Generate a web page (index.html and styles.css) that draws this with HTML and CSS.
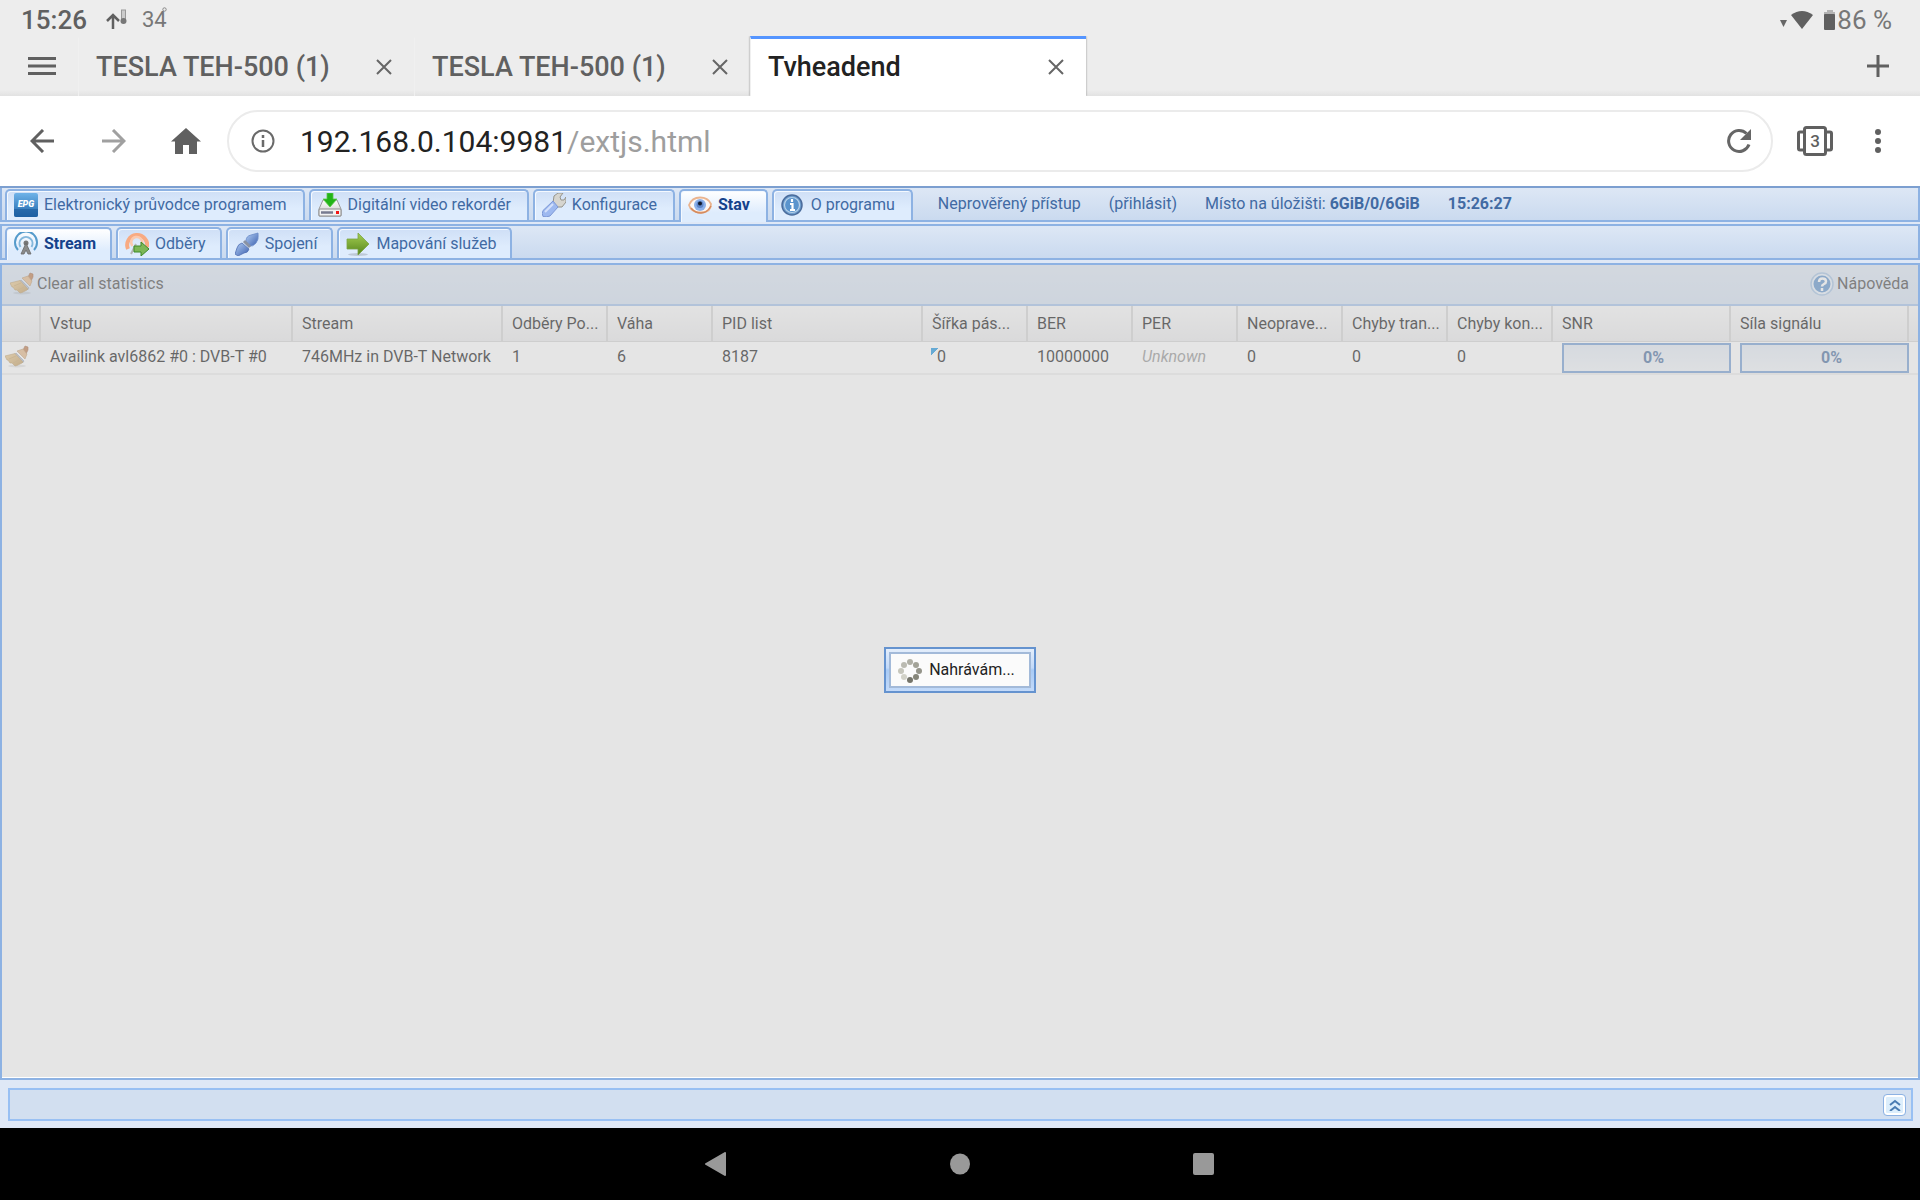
FILE: index.html
```html
<!DOCTYPE html>
<html lang="cs">
<head>
    <meta charset="UTF-8">
    <meta name="viewport" content="width=device-width, initial-scale=1.0">
    <title>Tvheadend</title>
    <link rel="stylesheet" href="styles.css">
</head>
<body>
    <svg class="defs" width="0" height="0" aria-hidden="true">
        <defs>
            <linearGradient id="gBlue" x1="0" y1="0" x2="0" y2="1">
                <stop offset="0" stop-color="#6fb3e8"/>
                <stop offset="1" stop-color="#1f66ab"/>
            </linearGradient>
            <linearGradient id="gSilver" x1="0" y1="0" x2="0" y2="1">
                <stop offset="0" stop-color="#ffffff"/>
                <stop offset="1" stop-color="#c4c4c4"/>
            </linearGradient>
            <linearGradient id="gGreen" x1="0" y1="0" x2="0" y2="1">
                <stop offset="0" stop-color="#a5cf52"/>
                <stop offset="1" stop-color="#55851c"/>
            </linearGradient>
            <linearGradient id="gPlug" x1="0" y1="0" x2="1" y2="1">
                <stop offset="0" stop-color="#b4d0f5"/>
                <stop offset="1" stop-color="#3b5fae"/>
            </linearGradient>
            <linearGradient id="gStraw" x1="0" y1="0" x2="1" y2="1">
                <stop offset="0" stop-color="#efcb8c"/>
                <stop offset="1" stop-color="#b98d48"/>
            </linearGradient>
            <symbol id="broom" viewBox="0 0 24 24">
                <ellipse cx="12" cy="21" rx="9" ry="1.500" fill="#000" opacity=".12"/>
                <path d="M18 5l2-4 3 1v3l-2 4z" fill="#b9703c" stroke="#94532a" stroke-width=".6"/>
                <path d="M12 6l6-2 4 5-2 5z" fill="#e3b17c" stroke="#b08450" stroke-width=".6"/>
                <path d="M11 8l8 8-1.500 2-7.500-9z" fill="#a9b8d0" stroke="#7f8a9c" stroke-width=".6"/>
                <path d="M10 8.500L0 11l2 4 1 0 2 3 2 0 3 3 2-.5 5-2.500 1-1z" fill="url(#gStraw)" stroke="#b08a4c" stroke-width=".6"/>
                <path d="M11 11l-7 3M14 15l-6 3" stroke="#c39c5c" stroke-width=".8" fill="none"/>
            </symbol>
            <symbol id="cross" viewBox="0 0 16 16">
                <path d="M1 1l14 14M15 1L1 15" stroke="#666" stroke-width="2" fill="none"/>
            </symbol>
        </defs>
    </svg>

    <div class="screen">
        <!-- system status bar -->
        <header class="statusbar">
            <span class="clock">15:26</span>
            <svg class="thermo" width="22" height="22" viewBox="0 0 22 22">
                <path d="M7 20V7M1 12l6-6 6 6" stroke="#606060" stroke-width="2.500" fill="none"/>
                <rect x="15.500" y="1" width="4" height="11" fill="#ccc" stroke="#999"/>
                <circle cx="17.500" cy="12" r="3" fill="#777"/>
            </svg>
            <span class="temp">34<svg width="5" height="5" viewBox="0 0 5 5"><circle cx="2.500" cy="2.500" r="1.700" fill="none" stroke="#888"/></svg></span>
            <span class="status-right">
                <svg width="34" height="20" viewBox="0 0 34 20">
                    <path d="M0 10h7l-3.500 7z" fill="#666"/>
                    <path d="M11 5Q22-3 33 5L22 19z" fill="#606060"/>
                </svg>
                <svg class="battery" width="12" height="20" viewBox="0 0 12 20">
                    <path d="M3 0h6v2h2v3H0V2h3z" fill="#b4b4b4"/>
                    <rect x="0" y="4" width="11" height="16" rx="1" fill="#606060"/>
                </svg>
                <span class="percent">86 %</span>
            </span>
        </header>

        <!-- browser tabs -->
        <div class="tabstrip">
            <button class="icon-btn menu-btn" aria-label="Menu">
                <svg width="28" height="20" viewBox="0 0 28 20"><path d="M0 2.500h28M0 10h28M0 17.500h28" stroke="#606060" stroke-width="3"/></svg>
            </button>
            <div class="browser-tab">
                <a href="#">TESLA TEH-500 (1)</a>
                <button class="icon-btn" aria-label="Zavřít"><svg width="16" height="16"><use href="#cross"/></svg></button>
            </div>
            <div class="browser-tab">
                <a href="#">TESLA TEH-500 (1)</a>
                <button class="icon-btn" aria-label="Zavřít"><svg width="16" height="16"><use href="#cross"/></svg></button>
            </div>
            <div class="browser-tab current">
                <a href="#">Tvheadend</a>
                <button class="icon-btn" aria-label="Zavřít"><svg width="16" height="16"><use href="#cross"/></svg></button>
            </div>
            <button class="icon-btn new-tab" aria-label="Nová karta">
                <svg width="22" height="22" viewBox="0 0 22 22"><path d="M11 0v22M0 11h22" stroke="#606060" stroke-width="3"/></svg>
            </button>
        </div>

        <!-- address bar -->
        <div class="addressbar">
            <button class="icon-btn" aria-label="Zpět">
                <svg width="24" height="24" viewBox="0 0 24 24"><path d="M24 12H2M13 1L2 12l11 11" stroke="#606060" stroke-width="3" fill="none"/></svg>
            </button>
            <button class="icon-btn" aria-label="Vpřed">
                <svg width="24" height="24" viewBox="0 0 24 24"><path d="M0 12h22M11 1l11 11-11 11" stroke="#a0a0a0" stroke-width="3" fill="none"/></svg>
            </button>
            <button class="icon-btn home" aria-label="Domů">
                <svg width="30" height="26" viewBox="0 0 30 26"><path d="M15 0l15 13.500h-4V26h-8v-9h-6v9H4V13.500H0z" fill="#606060"/></svg>
            </button>
            <div class="omnibox">
                <svg width="24" height="24" viewBox="0 0 24 24">
                    <circle cx="12" cy="12" r="10.500" fill="none" stroke="#6a6a6a" stroke-width="2"/>
                    <path d="M12 6v3M12 11v7" stroke="#6a6a6a" stroke-width="2.500"/>
                </svg>
                <div class="url" role="textbox" contenteditable="true" spellcheck="false" aria-label="Adresa">192.168.0.104:9981<span>/extjs.html</span></div>
                <button class="icon-btn" aria-label="Obnovit">
                    <svg width="26" height="26" viewBox="0 0 26 26">
                        <path d="M23 16.500A10.500 10.500 0 1 1 20.500 5.500" fill="none" stroke="#666" stroke-width="3"/>
                        <path d="M25 1v11H14z" fill="#666"/>
                    </svg>
                </button>
            </div>
            <button class="icon-btn switcher" aria-label="Karty">
                <svg width="36" height="30" viewBox="0 0 36 30">
                    <path d="M7 6H3q-1.500 0-1.500 1.500v15Q1.500 24 3 24h4M29 6h4q1.500 0 1.500 1.500v15Q34.500 24 33 24h-4" fill="none" stroke="#606060" stroke-width="3"/>
                    <rect x="7.500" y="1.500" width="21" height="27" rx="2" fill="#fff" stroke="#606060" stroke-width="3"/>
                    <text x="18" y="21" text-anchor="middle" font-family="Roboto, sans-serif" font-size="17" font-weight="500" fill="#606060">3</text>
                </svg>
            </button>
            <button class="icon-btn" aria-label="Více">
                <svg width="6" height="24" viewBox="0 0 6 24" fill="#606060"><circle cx="3" cy="3" r="3"/><circle cx="3" cy="12" r="3"/><circle cx="3" cy="21" r="3"/></svg>
            </button>
        </div>

        <!-- web page -->
        <main class="app">
            <nav class="tabs tabs-main">
                <button class="tab">
                    <svg class="ico" viewBox="0 0 24 24">
                        <rect width="24" height="24" rx="2" fill="url(#gBlue)"/>
                        <path d="M0 16h24v6q0 2-2 2H2q-2 0-2-2z" fill="#1d5c9c" opacity=".6"/>
                        <text x="12" y="14" text-anchor="middle" font-family="Roboto, sans-serif" font-size="9" font-weight="900" font-style="italic" fill="#fff">EPG</text>
                    </svg>
                    Elektronický průvodce programem
                </button>
                <button class="tab">
                    <svg class="ico" viewBox="0 0 24 24">
                        <path d="M5 7h14l4 9v7H1v-7z" fill="url(#gSilver)" stroke="#9a9a9a"/>
                        <rect x="1" y="16" width="22" height="7" rx="1" fill="#f2f2f2" stroke="#8c8c8c"/>
                        <path d="M3 19.500h12" stroke="#777b90" stroke-width="2.500"/>
                        <rect x="18" y="18" width="3" height="3" fill="#f21515"/>
                        <path d="M9 0h6v6h4l-7 8-7-8h4z" fill="#22b417" stroke="#5cc647" stroke-width=".8"/>
                    </svg>
                    Digitální video rekordér
                </button>
                <button class="tab">
                    <svg class="ico" viewBox="0 0 24 24">
                        <path d="M11 10l1-7 4-3 5 0-3 4 1 3 3 0 2-3v5l-4 5h-4l-3 2z" fill="#d6d5cf" stroke="#95948c"/>
                        <path d="M11 8l5 6-8 9q-4 1.500-7 .5-1.500-3 0-6z" fill="#9db9f0" stroke="#7d98d6"/>
                        <path d="M11 11l-8 8" stroke="#d3e1fb" stroke-width="2"/>
                    </svg>
                    Konfigurace
                </button>
                <button class="tab active">
                    <svg class="ico" viewBox="0 0 24 24">
                        <path d="M1 12Q4 4.500 12 4.500T23 11q0 8.500-10 8.500Q3 19.500 1 12z" fill="#fdf8f4" stroke="#eab48f" stroke-width="1.800"/>
                        <path d="M3 15q4 5 10 5t10-7" fill="none" stroke="#d58a5d" stroke-width="1.500"/>
                        <circle cx="12" cy="12" r="6" fill="#8cb1ea"/>
                        <circle cx="12" cy="11.500" r="3.500" fill="#5f86c8"/>
                        <circle cx="12" cy="10.500" r="2" fill="#10192c"/>
                    </svg>
                    Stav
                </button>
                <button class="tab">
                    <svg class="ico" viewBox="0 0 24 24">
                        <circle cx="11" cy="12" r="10" fill="#6f9fcf" stroke="#4a6c9c" stroke-width="1.500"/>
                        <circle cx="11" cy="12" r="7.500" fill="#5a94cd" stroke="#b9d2ea" stroke-width="1.200"/>
                        <path d="M11 6v3M9 11h2.500v6M9 17h5" stroke="#fff" stroke-width="2.200" fill="none"/>
                    </svg>
                    O programu
                </button>
                <div class="info">
                    <span>Neprověřený přístup</span>
                    <a href="#">(přihlásit)</a>
                    <span>Místo na úložišti: <b>6GiB/0/6GiB</b></span>
                    <b>15:26:27</b>
                </div>
            </nav>

            <nav class="tabs tabs-sub">
                <button class="tab active">
                    <svg class="ico" viewBox="0 0 24 24">
                        <path d="M4 18A11 11 0 1 1 20 18" fill="none" stroke="#559bcb" stroke-width="2"/>
                        <path d="M6.500 15A6.500 6.500 0 1 1 17.500 15" fill="none" stroke="#83b7db" stroke-width="2"/>
                        <circle cx="12" cy="11" r="2.500" fill="#777"/>
                        <path d="M12 11l5 11h-3l-2-4-2 4H7z" fill="#8b8b8b" stroke="#686868" stroke-width=".8"/>
                    </svg>
                    Stream
                </button>
                <button class="tab">
                    <svg class="ico" viewBox="0 0 24 24">
                        <path d="M3 17A10 10 0 1 1 22 15" fill="none" stroke="#f8aa82" stroke-width="4"/>
                        <path d="M7.500 14A5.500 5.500 0 1 1 17 12" fill="none" stroke="#fbc9ae" stroke-width="2.500"/>
                        <path d="M11 12l-5 10" stroke="#b5b5b5" stroke-width="2"/>
                        <path d="M9 14h7v-4l8 7-8 7v-4H9z" fill="#7db757" stroke="#3e8a26"/>
                    </svg>
                    Odběry
                </button>
                <button class="tab">
                    <svg class="ico" viewBox="0 0 24 24">
                        <path d="M11 9q0-5 5-6l7-2q1 7-2 10-3 4-7 3z" fill="url(#gPlug)" stroke="#6a8ac8" stroke-width=".8"/>
                        <path d="M9 9l6 6" stroke="#8a93a3" stroke-width="3"/>
                        <path d="M7 11l7 6q-1 4-5 4l-6 3-3-2 2-6q1-4 5-5z" fill="url(#gPlug)" stroke="#5270b2" stroke-width=".8"/>
                    </svg>
                    Spojení
                </button>
                <button class="tab">
                    <svg class="ico" viewBox="0 0 24 24">
                        <ellipse cx="12" cy="22.500" rx="10" ry="1.500" fill="#000" opacity=".15"/>
                        <path d="M1 7h11V1l11 11-11 11v-6H1z" fill="url(#gGreen)" stroke="#7ba544" stroke-width=".8"/>
                    </svg>
                    Mapování služeb
                </button>
            </nav>

            <section class="panel">
                <div class="toolbar">
                    <button class="tool"><svg class="ico"><use href="#broom"/></svg>Clear all statistics</button>
                    <button class="tool">
                        <svg class="ico" viewBox="0 0 24 24">
                            <circle cx="12" cy="12" r="11" fill="#e5effa" stroke="#9cbde0" stroke-width="1.500"/>
                            <circle cx="12" cy="12" r="8.500" fill="#4c86c6"/>
                            <path d="M9 10q0-3.500 3.500-3.500T16 9.500q0 1.500-2 2.500t-2 2.500M12 16v3" fill="none" stroke="#fff" stroke-width="2.500"/>
                        </svg>Nápověda
                    </button>
                </div>
                <table class="grid">
                    <colgroup>
                        <col class="c-icon"><col class="c-input"><col class="c-wide"><col class="c-std"><col class="c-std">
                        <col class="c-wide"><col class="c-std"><col class="c-std"><col class="c-std"><col class="c-std">
                        <col class="c-std"><col class="c-std"><col class="c-bar"><col class="c-bar"><col>
                    </colgroup>
                    <thead>
                        <tr>
                            <th></th><th>Vstup</th><th>Stream</th><th>Odběry Po...</th><th>Váha</th><th>PID list</th>
                            <th>Šířka pás...</th><th>BER</th><th>PER</th><th>Neoprave...</th><th>Chyby tran...</th>
                            <th>Chyby kon...</th><th>SNR</th><th>Síla signálu</th><th></th>
                        </tr>
                    </thead>
                    <tbody>
                        <tr>
                            <td class="act"><svg class="ico"><use href="#broom"/></svg></td>
                            <td>Availink avl6862 #0 : DVB-T #0</td>
                            <td>746MHz in DVB-T Network</td>
                            <td>1</td>
                            <td>6</td>
                            <td>8187</td>
                            <td class="dirty">0</td>
                            <td>10000000</td>
                            <td class="unknown">Unknown</td>
                            <td>0</td>
                            <td>0</td>
                            <td>0</td>
                            <td class="bar"><div class="meter">0%</div></td>
                            <td class="bar"><div class="meter">0%</div></td>
                            <td></td>
                        </tr>
                    </tbody>
                </table>
                <div class="mask">
                    <div class="loading" role="status">
                        <div class="loading-body">
                            <svg width="24" height="24" viewBox="0 0 24 24">
                                <circle cx="12" cy="3" r="3" fill="#b0b0a6"/>
                                <circle cx="18" cy="6" r="3" fill="#a3a398"/>
                                <circle cx="21" cy="12" r="3" fill="#94948a"/>
                                <circle cx="18" cy="18" r="3" fill="#86867a"/>
                                <circle cx="12" cy="21" r="3" fill="#74746a"/>
                                <circle cx="6" cy="18" r="3" fill="#d2d2c8"/>
                                <circle cx="3" cy="12" r="3" fill="#c6c6bc"/>
                                <circle cx="6" cy="6" r="3" fill="#bbbbb2"/>
                            </svg>
                            <span>Nahrávám...</span>
                        </div>
                    </div>
                </div>
            </section>

            <footer class="south">
                <div class="south-bar">
                    <button class="expand" aria-label="Rozbalit">
                        <svg width="12" height="12" viewBox="0 0 12 12"><path d="M1 6l5-4 5 4M1 12l5-4 5 4" fill="none" stroke="#4a7cb2" stroke-width="2"/></svg>
                    </button>
                </div>
            </footer>
        </main>

        <!-- android navigation -->
        <nav class="sysnav">
            <button class="icon-btn" aria-label="Zpět"><svg width="24" height="24" viewBox="0 0 24 24"><path d="M21 1v22L2 12z" fill="#999" stroke="#999" stroke-width="2" stroke-linejoin="round"/></svg></button>
            <button class="icon-btn" aria-label="Domů"><svg width="24" height="24" viewBox="0 0 24 24"><ellipse cx="12" cy="12" rx="10" ry="10.500" fill="#999"/></svg></button>
            <button class="icon-btn" aria-label="Přehled"><svg width="24" height="24" viewBox="0 0 24 24"><rect x="1" y="1" width="21" height="22" rx="2" fill="#999"/></svg></button>
        </nav>
    </div>
</body>
</html>
```

FILE: styles.css
```css
* {
    box-sizing: border-box;
}

body {
    margin: 0;
    font-family: Roboto, sans-serif;
    font-size: 16px;
    background: #000;
}

button {
    font-family: inherit;
    font-size: inherit;
    margin: 0;
    padding: 0;
    border: none;
    background: none;
    cursor: pointer;
}

a {
    color: inherit;
    text-decoration: none;
}

svg {
    display: block;
    flex: none;
}

.defs {
    position: absolute;
}

.screen {
    display: flex;
    flex-direction: column;
    height: 100vh;
}

.icon-btn {
    display: flex;
    align-items: center;
    justify-content: center;
}

.ico {
    width: 24px;
    height: 24px;
}

/* status bar */
.statusbar {
    display: flex;
    align-items: center;
    height: 36px;
    padding: 3px 28px 0 21px;
    background: #ededed;
    color: #606060;
}

.clock {
    font-size: 26px;
    font-weight: 500;
}

.thermo {
    margin-left: 19px;
}

.temp {
    position: relative;
    margin-left: 14px;
    font-size: 22px;
    color: #777;
}

.temp svg {
    position: absolute;
    top: 0;
    right: 0;
}

.status-right {
    display: flex;
    align-items: center;
    margin-left: auto;
}

.battery {
    margin-left: 10px;
}

.percent {
    margin-left: 1px;
    font-size: 26px;
    color: #777;
}

/* browser tabs */
.tabstrip {
    display: flex;
    height: 60px;
    padding-right: 31px;
    background: linear-gradient(#ededed 54px, #e2e2e2);
}

.menu-btn {
    width: 78px;
    padding-left: 6px;
}

.browser-tab {
    display: flex;
    align-items: center;
    justify-content: space-between;
    width: 336px;
    padding: 0 22px 2px 17px;
    border-top: 3px solid transparent;
    border-left: 1px solid #f0f0f0;
    font-size: 27px;
    font-weight: 500;
    color: #606060;
}

.browser-tab.current {
    background: #fff;
    border-top-color: #5595ff;
    color: #222;
    box-shadow: 0 0 2px rgba(0, 0, 0, 0.4);
    clip-path: inset(0 -2px 0 -2px);
}

.new-tab {
    margin-left: auto;
}

/* address bar */
.addressbar {
    display: flex;
    align-items: center;
    gap: 48px;
    height: 90px;
    padding: 0 39px 0 30px;
    background: #fff;
}

.addressbar > .home {
    margin-left: -3px;
}

.omnibox {
    display: flex;
    align-items: center;
    flex: 1;
    height: 62px;
    margin-left: -22px;
    margin-right: -24px;
    padding: 0 19px 0 22px;
    border: 2px solid #ebebeb;
    border-radius: 31px;
}

.url {
    flex: 1;
    margin-left: 25px;
    padding-top: 2px;
    outline: none;
    font-size: 30px;
    line-height: 40px;
    color: #222;
}

.url span {
    color: #9e9e9e;
}

.addressbar > .switcher {
    margin-right: -6px;
}

/* tvheadend */
.app {
    display: flex;
    flex-direction: column;
    flex: 1;
    min-height: 0;
    border-top: 2px solid #7c9fd0;
    background: #dfe8f6;
}

.tabs {
    display: flex;
    gap: 4px;
    padding: 1px 3px 0 3px;
    border: 2px solid #8db2e3;
    border-top: none;
    background: linear-gradient(#dde7f5, #cadaef);
}

.tabs-main {
    height: 34px;
}

.tabs-sub,
.panel {
    border-top: 2px solid #8db2e3;
}

.tabs-sub {
    height: 36px;
    margin-top: 2px;
}

.tab {
    display: flex;
    align-items: center;
    gap: 6px;
    padding: 0 14px 0 7px;
    border: 2px solid #8db2e3;
    border-bottom: none;
    border-radius: 5px 5px 0 0;
    background: linear-gradient(#cfdff6, #deecfd 60%);
    box-shadow: inset 1px 1px 0 #f4f9ff;
    color: #416aa3;
    white-space: nowrap;
    line-height: 20px;
}

.tab.active {
    margin-bottom: -2px;
    padding-bottom: 2px;
    background: linear-gradient(#fff, #deecfd 70%);
    color: #15428b;
    font-weight: bold;
}

.tabs-main .tab {
    padding-right: 16px;
    padding-bottom: 1px;
}

.tabs-main .tab.active {
    padding-bottom: 3px;
}

.info {
    display: flex;
    align-items: center;
    gap: 28px;
    padding-left: 21px;
    padding-bottom: 2px;
    color: #416aa3;
    white-space: nowrap;
}

.panel {
    position: relative;
    flex: 1;
    min-height: 0;
    margin-top: 3px;
    border: 2px solid #8db2e3;
    background: #fff;
}

.toolbar {
    display: flex;
    justify-content: space-between;
    height: 41px;
    padding: 0 9px 2px 8px;
    border-bottom: 2px solid #99bbe8;
    background: linear-gradient(#dae5f3, #d0def0);
}

.tool {
    display: flex;
    align-items: center;
    gap: 3px;
    color: #333;
}

.grid {
    width: 100%;
    table-layout: fixed;
    border-collapse: separate;
    border-spacing: 0;
}

.c-icon { width: 39px; }
.c-input { width: 252px; }
.c-wide { width: 210px; }
.c-std { width: 105px; }
.c-bar { width: 178px; }

.grid th,
.grid td {
    padding: 0 4px 0 9px;
    white-space: nowrap;
    text-align: left;
    font-weight: normal;
}

.grid th {
    height: 36px;
    border-right: 2px solid #d0d0d0;
    border-bottom: 1px solid #d0d0d0;
    background: linear-gradient(#f9f9f9, #e8e8ea);
}

.grid th:last-child {
    border-right: none;
}

.grid td {
    height: 33px;
    padding-right: 0;
    padding-bottom: 2px;
    border-bottom: 2px solid #ededed;
}

.grid .act {
    padding-left: 3px;
}

.grid .dirty {
    background: linear-gradient(135deg, #0088dd 50%, transparent 50%) no-repeat 8px 6px / 7px 8px;
    padding-left: 14px;
}

.grid .unknown {
    color: #888;
    font-style: italic;
}

.grid .bar {
    padding: 1px 0 0 9px;
}

.meter {
    height: 30px;
    padding-left: 14px;
    border: 2px solid #6593cf;
    background: linear-gradient(#e0e8f3, #eff3f8);
    color: #396095;
    font-weight: bold;
    text-align: center;
    line-height: 26px;
}

/* covers the whole panel while the store is loading */
.mask {
    position: absolute;
    inset: 0 0 1px 0;
    display: flex;
    align-items: center;
    justify-content: center;
    padding-bottom: 2px;
    background: rgba(204, 204, 204, 0.5);
}

.loading {
    padding: 3px;
    border: 2px solid #6593cf;
    background: linear-gradient(#e4eefb, #c3daf9 45%, #a9cbf5 50%, #c3daf9);
}

.loading-body {
    display: flex;
    align-items: center;
    gap: 7px;
    height: 36px;
    padding: 2px 14px 0 7px;
    border: 2px solid #a3bad9;
    background: #fbfbfb;
    color: #222;
}

.loading-body span {
    padding-bottom: 4px;
}

.south {
    padding: 8px 7px 7px 8px;
}

.south-bar {
    display: flex;
    align-items: center;
    justify-content: flex-end;
    height: 33px;
    padding-right: 5px;
    border: 2px solid #99c0f3;
    background: #d2dff0;
}

.expand {
    display: flex;
    align-items: center;
    justify-content: center;
    width: 23px;
    height: 22px;
    border: 1px solid #8db2e3;
    border-radius: 4px;
    background: #dceefc;
    box-shadow: inset 0 0 0 2px #fff;
}

/* android navigation */
.sysnav {
    display: flex;
    align-items: center;
    justify-content: center;
    gap: 220px;
    height: 72px;
    background: #000;
}
```
